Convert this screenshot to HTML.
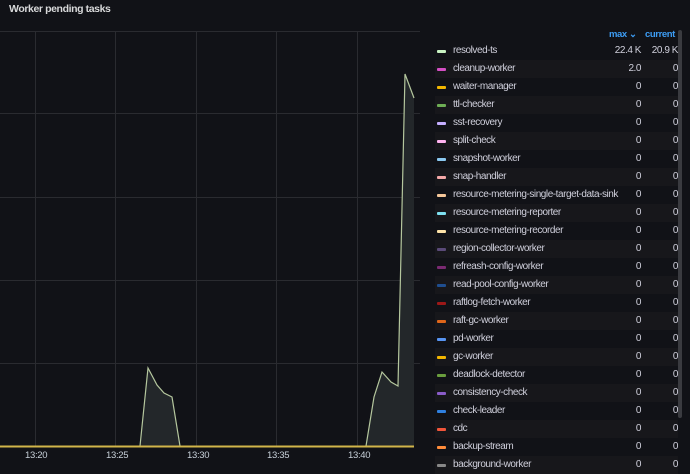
<!DOCTYPE html><html><head><style>
body{margin:0;width:690px;height:465px;background:#111217;overflow:hidden;font-family:"Liberation Sans",sans-serif;color:#d0d0dc;position:relative}
.t{position:absolute;left:9px;top:3px;font-size:10.5px;font-weight:bold;color:#d8d9da;letter-spacing:-0.4px}
.lg{position:absolute;left:435px;top:42px;width:243px}
.r{height:18px;position:relative;font-size:10px;line-height:18px;letter-spacing:-0.45px}
.r:nth-child(even){background:#17171b}
.sw{position:absolute;left:2px;top:8px;width:9px;height:3px;border-radius:1px}
.n{position:absolute;left:18px}
.m{position:absolute;right:37px}
.c{position:absolute;right:0}
.h{position:absolute;top:29px;font-size:9.5px;font-weight:bold;color:#3d9df5;letter-spacing:-0.4px}
.ax{position:absolute;top:450px;font-size:9.5px;color:#c7d0d9;letter-spacing:-0.3px}
</style></head><body>
<div class="t">Worker pending tasks</div>
<svg width="420" height="465" style="position:absolute;left:0;top:0">
<g stroke="#2a2b30" stroke-width="1">
<line x1="0" y1="31.5" x2="420" y2="31.5"/>
<line x1="0" y1="113.5" x2="420" y2="113.5"/>
<line x1="0" y1="197.5" x2="420" y2="197.5"/>
<line x1="0" y1="280.5" x2="420" y2="280.5"/>
<line x1="0" y1="363.5" x2="420" y2="363.5"/>
<line x1="35.5" y1="31" x2="35.5" y2="446"/>
<line x1="115.5" y1="31" x2="115.5" y2="446"/>
<line x1="196.5" y1="31" x2="196.5" y2="446"/>
<line x1="276.5" y1="31" x2="276.5" y2="446"/>
<line x1="357.5" y1="31" x2="357.5" y2="446"/>
</g>
<path d="M140 446L148 368L157 385L164 393L172 397L180 446Z" fill="#23272a"/>
<path d="M366 446L374 397L382 372L391 382L398 386L405 74L414 98L414 446Z" fill="#23272a"/>
<path d="M140 446L148 368L157 385L164 393L172 397L180 446" fill="none" stroke="#b5c79e" stroke-width="1.2"/>
<path d="M366 446L374 397L382 372L391 382L398 386L405 74L414 98" fill="none" stroke="#b5c79e" stroke-width="1.2"/>
<line x1="0" y1="446.5" x2="414" y2="446.5" stroke="#d1b54a" stroke-width="2"/>
</svg>
<div class="ax" style="left:25px">13:20</div>
<div class="ax" style="left:106px">13:25</div>
<div class="ax" style="left:187px">13:30</div>
<div class="ax" style="left:267px">13:35</div>
<div class="ax" style="left:348px">13:40</div>
<div class="h" style="left:609px">max ⌄</div>
<div class="h" style="left:645px">current</div>
<div style="position:absolute;left:678px;top:30px;width:4px;height:388px;background:#3a3b40;border-radius:2px"></div>
<div class="lg">
<div class="r"><span class="sw" style="background:#c8f2c2"></span><span class="n">resolved-ts</span><span class="m">22.4 K</span><span class="c">20.9 K</span></div>
<div class="r"><span class="sw" style="background:#d44fc4"></span><span class="n">cleanup-worker</span><span class="m">2.0</span><span class="c">0</span></div>
<div class="r"><span class="sw" style="background:#f2b600"></span><span class="n">waiter-manager</span><span class="m">0</span><span class="c">0</span></div>
<div class="r"><span class="sw" style="background:#6eae55"></span><span class="n">ttl-checker</span><span class="m">0</span><span class="c">0</span></div>
<div class="r"><span class="sw" style="background:#c4aeff"></span><span class="n">sst-recovery</span><span class="m">0</span><span class="c">0</span></div>
<div class="r"><span class="sw" style="background:#ffb3f0"></span><span class="n">split-check</span><span class="m">0</span><span class="c">0</span></div>
<div class="r"><span class="sw" style="background:#8ac8f0"></span><span class="n">snapshot-worker</span><span class="m">0</span><span class="c">0</span></div>
<div class="r"><span class="sw" style="background:#f4a8a8"></span><span class="n">snap-handler</span><span class="m">0</span><span class="c">0</span></div>
<div class="r"><span class="sw" style="background:#f5c79a"></span><span class="n">resource-metering-single-target-data-sink</span><span class="m">0</span><span class="c">0</span></div>
<div class="r"><span class="sw" style="background:#7ee0f0"></span><span class="n">resource-metering-reporter</span><span class="m">0</span><span class="c">0</span></div>
<div class="r"><span class="sw" style="background:#fce2a8"></span><span class="n">resource-metering-recorder</span><span class="m">0</span><span class="c">0</span></div>
<div class="r"><span class="sw" style="background:#5a4a78"></span><span class="n">region-collector-worker</span><span class="m">0</span><span class="c">0</span></div>
<div class="r"><span class="sw" style="background:#7a2a72"></span><span class="n">refreash-config-worker</span><span class="m">0</span><span class="c">0</span></div>
<div class="r"><span class="sw" style="background:#1f4e90"></span><span class="n">read-pool-config-worker</span><span class="m">0</span><span class="c">0</span></div>
<div class="r"><span class="sw" style="background:#9c1818"></span><span class="n">raftlog-fetch-worker</span><span class="m">0</span><span class="c">0</span></div>
<div class="r"><span class="sw" style="background:#e0661a"></span><span class="n">raft-gc-worker</span><span class="m">0</span><span class="c">0</span></div>
<div class="r"><span class="sw" style="background:#5794f2"></span><span class="n">pd-worker</span><span class="m">0</span><span class="c">0</span></div>
<div class="r"><span class="sw" style="background:#f2b600"></span><span class="n">gc-worker</span><span class="m">0</span><span class="c">0</span></div>
<div class="r"><span class="sw" style="background:#6a9e3e"></span><span class="n">deadlock-detector</span><span class="m">0</span><span class="c">0</span></div>
<div class="r"><span class="sw" style="background:#8a5cc8"></span><span class="n">consistency-check</span><span class="m">0</span><span class="c">0</span></div>
<div class="r"><span class="sw" style="background:#2f80e0"></span><span class="n">check-leader</span><span class="m">0</span><span class="c">0</span></div>
<div class="r"><span class="sw" style="background:#f2553a"></span><span class="n">cdc</span><span class="m">0</span><span class="c">0</span></div>
<div class="r"><span class="sw" style="background:#ff8c3a"></span><span class="n">backup-stream</span><span class="m">0</span><span class="c">0</span></div>
<div class="r"><span class="sw" style="background:#888"></span><span class="n">background-worker</span><span class="m">0</span><span class="c">0</span></div>
</div>
</body></html>
